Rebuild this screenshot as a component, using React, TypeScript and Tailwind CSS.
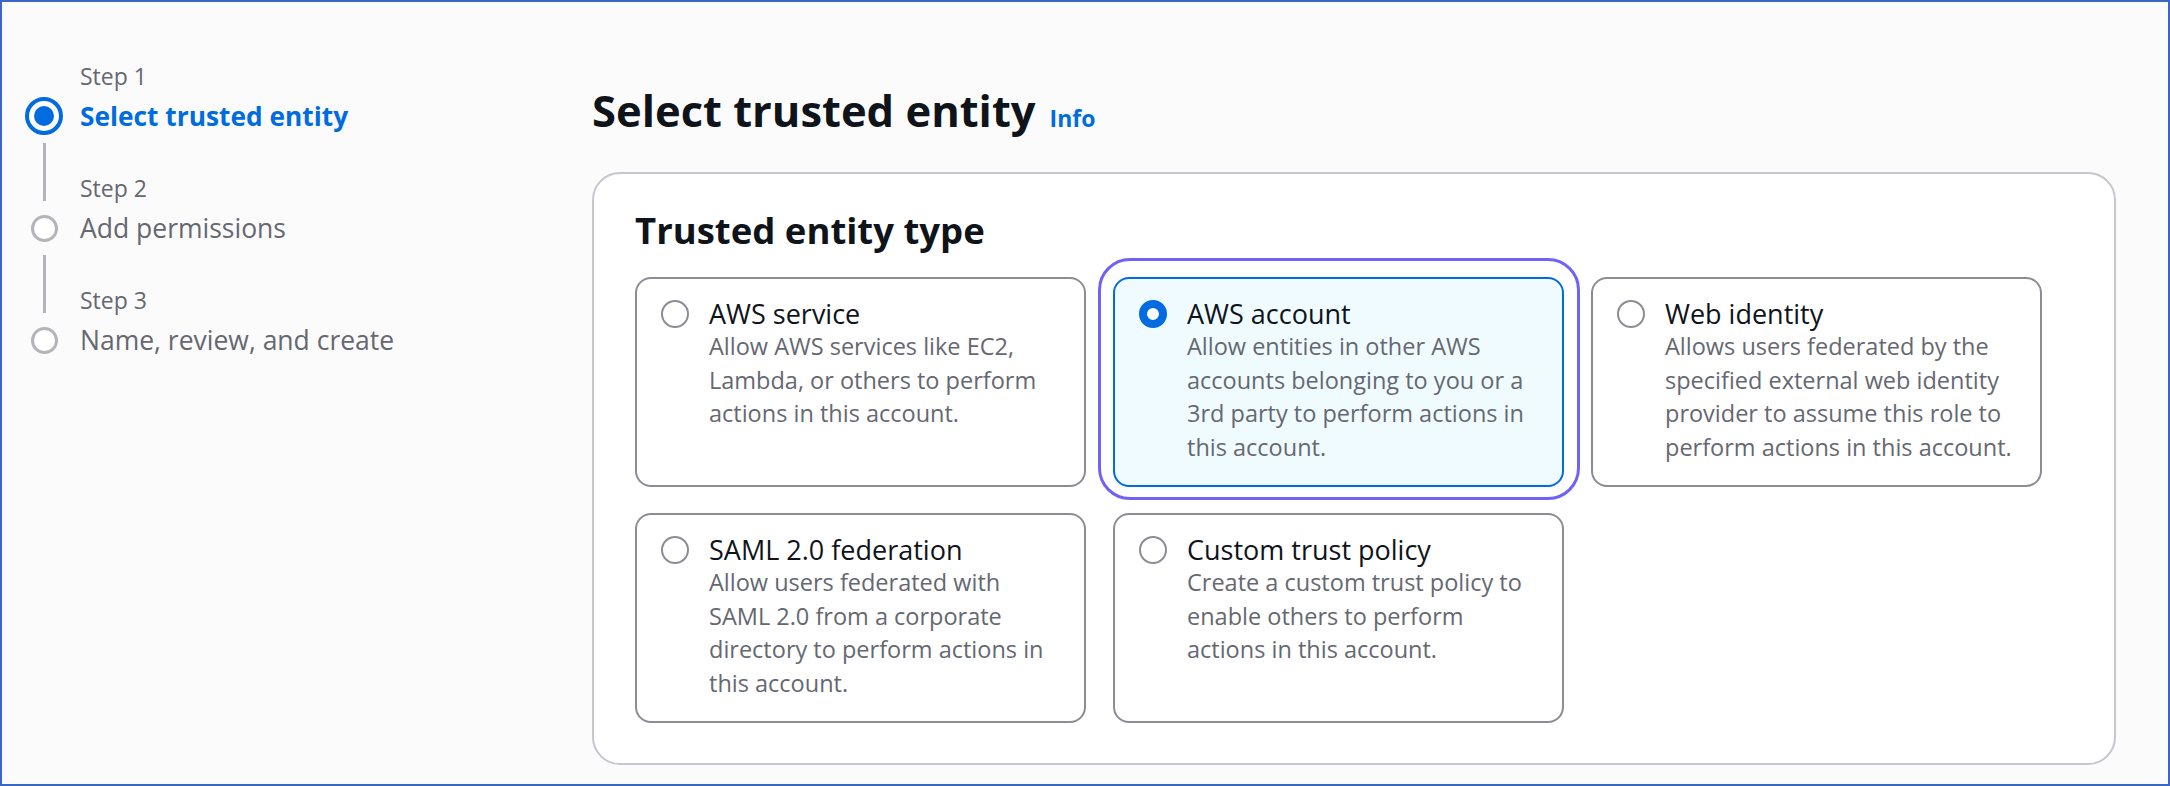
import React from "react";

type Card = { title: string; lines: string[]; selected?: boolean };

const cards: Card[] = [
  {
    title: "AWS service",
    lines: ["Allow AWS services like EC2,", "Lambda, or others to perform", "actions in this account."],
  },
  {
    title: "AWS account",
    lines: [
      "Allow entities in other AWS",
      "accounts belonging to you or a",
      "3rd party to perform actions in",
      "this account.",
    ],
    selected: true,
  },
  {
    title: "Web identity",
    lines: [
      "Allows users federated by the",
      "specified external web identity",
      "provider to assume this role to",
      "perform actions in this account.",
    ],
  },
  {
    title: "SAML 2.0 federation",
    lines: [
      "Allow users federated with",
      "SAML 2.0 from a corporate",
      "directory to perform actions in",
      "this account.",
    ],
  },
  {
    title: "Custom trust policy",
    lines: ["Create a custom trust policy to", "enable others to perform", "actions in this account."],
  },
];

const steps = [
  { label: "Step 1", title: "Select trusted entity", active: true },
  { label: "Step 2", title: "Add permissions", active: false },
  { label: "Step 3", title: "Name, review, and create", active: false },
];

function Tile({ card }: { card: Card }) {
  return (
    <div className="relative">
      {card.selected && (
        <div className="pointer-events-none absolute top-[-19px] bottom-[-13px] left-[-15px] right-[-16px] rounded-[32px] border-[3px] border-[#7062f6]" />
      )}
      <div
        className={
          card.selected
            ? "flex h-[210px] gap-[20px] rounded-[16px] border-[2px] border-[#006ce0] bg-[#f0fbff] pl-[24px] pr-[12px] pt-[18px]"
            : "flex h-[210px] gap-[20px] rounded-[16px] border-[2px] border-[#8c8c94] bg-white pl-[24px] pr-[12px] pt-[18px]"
        }
      >
        <div className="flex h-[33px] shrink-0 items-center">
          <span
            className={
              card.selected
                ? "block h-[28px] w-[28px] rounded-full border-[8px] border-[#006ce0] bg-white"
                : "block h-[28px] w-[28px] rounded-full border-[2px] border-[#8c8c94] bg-white"
            }
          />
        </div>
        <div className="whitespace-nowrap">
          <div className="text-[27px] leading-[33px] text-[#0f141a]">{card.title}</div>
          <div className="text-[23.5px] leading-[33.5px] text-[#656871]">
            {card.lines.map((l, i) => (
              <div key={i}>{l}</div>
            ))}
          </div>
        </div>
      </div>
    </div>
  );
}

export default function App() {
  return (
    <div className="flex h-[786px] w-[2170px] overflow-hidden border-[2px] border-[#3a66c5] bg-[#fbfbfc] font-[family-name:'Open_Sans',sans-serif]">
      <nav className="w-[590px] shrink-0 pl-[23px] pt-[56px]">
        {steps.map((s, i) => {
          const last = i === steps.length - 1;
          return (
            <div key={i} className="flex gap-[17px]">
              <div className="flex w-[38px] flex-col items-center">
                <div className="flex h-[36px] w-full justify-center">
                  {i > 0 && <div className="h-[31px] w-[3px] bg-[#b4b4bb]" />}
                </div>
                <div className="flex h-[44px] items-center">
                  {s.active ? (
                    <span className="flex h-[38px] w-[38px] items-center justify-center rounded-full border-[4px] border-[#006ce0] bg-white">
                      <span className="block h-[20px] w-[20px] rounded-full bg-[#006ce0]" />
                    </span>
                  ) : (
                    <span className="block h-[27px] w-[27px] rounded-full border-[3.5px] border-[#b4b4bb] bg-white" />
                  )}
                </div>
                {!last && <div className="mt-[5px] w-[3px] flex-1 bg-[#b4b4bb]" />}
              </div>
              <div className={last ? "whitespace-nowrap" : "whitespace-nowrap pb-[32px]"}>
                <div className="h-[36px] text-[23px] leading-[36px] text-[#656871]">{s.label}</div>
                <div
                  className={
                    s.active
                      ? "text-[26.3px] font-bold leading-[44px] text-[#006ce0]"
                      : "text-[26.5px] leading-[44px] text-[#656871]"
                  }
                >
                  {s.title}
                </div>
              </div>
            </div>
          );
        })}
      </nav>
      <main className="flex-1 pt-[81px]">
        <div className="flex items-baseline gap-[14px]">
          <h1 className="whitespace-nowrap text-[43.5px] font-bold leading-[56px] text-[#0f141a]">
            Select trusted entity
          </h1>
          <span className="text-[23px] font-bold text-[#006ce0]">Info</span>
        </div>
        <section className="mt-[33px] w-[1524px] rounded-[28px] border-[2px] border-[#c6c6cd] bg-white px-[41px] pb-[40px] pt-[34px]">
          <h2 className="whitespace-nowrap text-[36.5px] font-bold leading-[44px] text-[#0f141a]">
            Trusted entity type
          </h2>
          <div className="mt-[25px] grid grid-cols-[451px_451px_451px] gap-x-[27px] gap-y-[26px]">
            {cards.map((c, i) => (
              <Tile key={i} card={c} />
            ))}
          </div>
        </section>
      </main>
    </div>
  );
}
